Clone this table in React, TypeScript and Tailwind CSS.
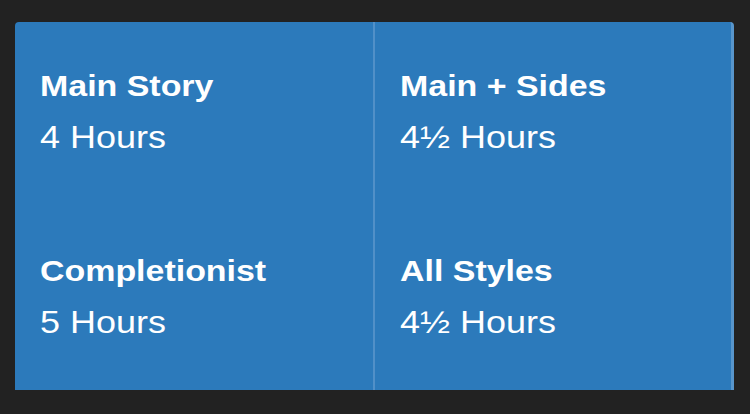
import React from 'react'

interface Stat {
  label: string
  value: string
}

const rows: Stat[][] = [
  [
    { label: 'Main Story', value: '4 Hours' },
    { label: 'Main + Sides', value: '4½ Hours' },
  ],
  [
    { label: 'Completionist', value: '5 Hours' },
    { label: 'All Styles', value: '4½ Hours' },
  ],
]

// the reference type is set wide, so stretch it a little on x
const StatCell: React.FC<{ stat: Stat }> = ({ stat }) => (
  <div className="h-[185px] pl-[25px] pt-[46px]">
    <div className="origin-left scale-x-[1.15] whitespace-nowrap text-[29.5px] font-bold leading-[36px] text-white">
      {stat.label}
    </div>
    <div className="mt-[16px] origin-left scale-x-[1.16] whitespace-nowrap text-[31px] leading-[36px] text-white">
      {stat.value}
    </div>
  </div>
)

const App: React.FC = () => {
  const left = rows.map((r) => r[0])
  const right = rows.map((r) => r[1])

  return (
    <div
      className="h-[414px] w-[750px] overflow-hidden bg-[#222222] pl-[15px] pt-[22px]"
      style={{ fontFamily: '"Liberation Sans", Arial, Helvetica, sans-serif' }}
    >
      <div className="flex h-[368px] w-[719px] overflow-hidden rounded-t-[4px] border-r-[3px] border-[#5896cc] bg-[#2c7abb]">
        <div className="w-[358px]">
          {left.map((stat) => (
            <StatCell key={stat.label} stat={stat} />
          ))}
        </div>
        <div className="w-[2px] bg-[#5190c8]" />
        <div className="flex-1">
          {right.map((stat) => (
            <StatCell key={stat.label} stat={stat} />
          ))}
        </div>
      </div>
    </div>
  )
}

export default App
